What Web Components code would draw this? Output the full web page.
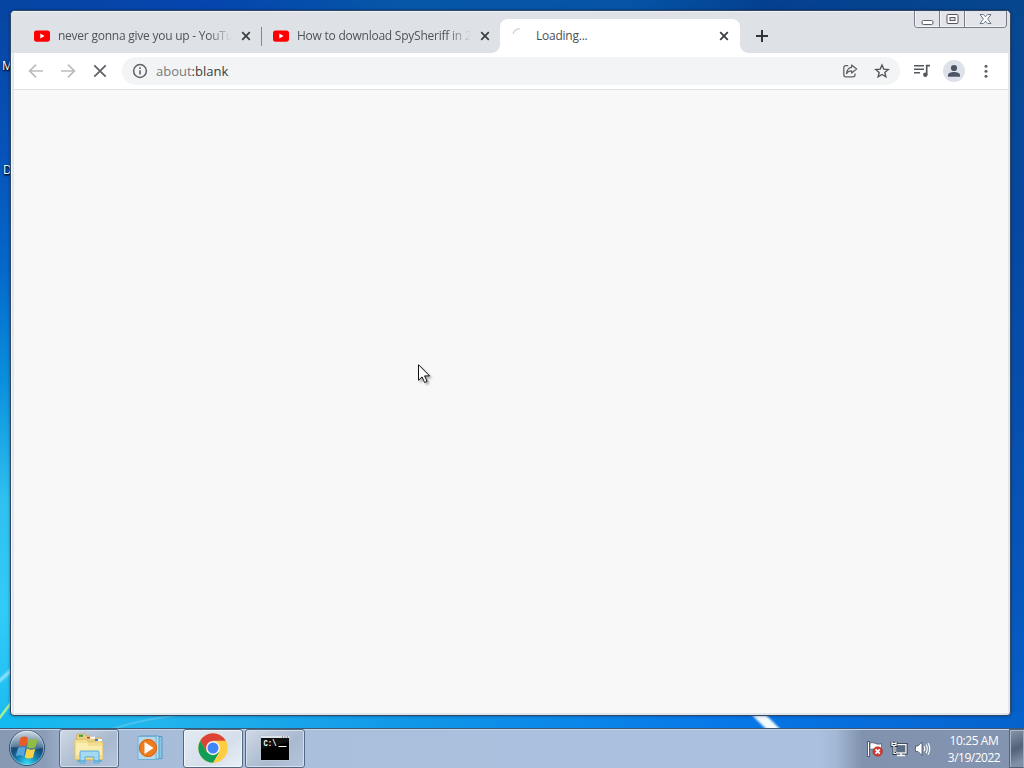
<!DOCTYPE html>
<html lang="en">
<head>
<meta charset="utf-8">
<title>Desktop</title>
<style>
  html, body {
    margin: 0;
    width: 1024px;
    height: 768px;
    overflow: hidden;
    font-family: "Open Sans", "Noto Sans", sans-serif;
  }
</style>
</head>
<body>
<desk-top>
  <desktop-label slot="labels" style="left: 2px; top: 58px">M</desktop-label>
  <desktop-label slot="labels" style="left: 3px; top: 162px">D</desktop-label>

  <browser-window>
    <browser-tab slot="tabs" icon="youtube">never gonna give you up - YouTube</browser-tab>
    <browser-tab slot="tabs" icon="youtube" last>How to download SpySheriff in 2022</browser-tab>
    <browser-tab slot="tabs" icon="loading" active>Loading...</browser-tab>
    <window-controls slot="controls"></window-controls>
    <nav-bar slot="nav">about<b>:blank</b></nav-bar>
  </browser-window>

  <task-bar slot="taskbar">
    <task-button icon="explorer" open></task-button>
    <task-button icon="player"></task-button>
    <task-button icon="chrome" open active></task-button>
    <task-button icon="console" open></task-button>
    <tray-area slot="tray">
      <tray-clock time="10:25 AM" date="3/19/2022"></tray-clock>
    </tray-area>
  </task-bar>

  <mouse-pointer slot="pointer" style="left: 418px; top: 364px"></mouse-pointer>
</desk-top>

<script>
const icons = {
  youtube: `<svg width="16" height="16" viewBox="0 0 16 16"><rect y="2.5" width="16" height="11.2" rx="2.6" fill="#f00"/><path d="M6.3 5.6v5l4.3-2.5z" fill="#fff"/></svg>`,
  loading: `<svg width="16" height="16" viewBox="0 0 16 16" fill="none" stroke="#d0d2d4" stroke-width="1.3"><path d="M1 6.2A7.2 7.2 0 0 1 8 .9"/></svg>`,
  close: `<svg width="16" height="16" viewBox="0 0 16 16" fill="none" stroke="#3c4043" stroke-width="1.8"><path d="M4.2 4.2l7.6 7.6M11.8 4.2l-7.6 7.6"/></svg>`,
  plus: `<svg width="16" height="16" viewBox="0 0 16 16" fill="none" stroke="#303337" stroke-width="2"><path d="M8 2v12M2 8h12"/></svg>`,
  back: `<svg width="20" height="20" viewBox="0 0 20 20" fill="none" stroke="#babcbe" stroke-width="1.7"><path d="M17 10H4M10 3.6L3.6 10l6.4 6.4"/></svg>`,
  forward: `<svg width="20" height="20" viewBox="0 0 20 20" fill="none" stroke="#babcbe" stroke-width="1.7"><path d="M3 10h13M10 3.6l6.4 6.4-6.4 6.4"/></svg>`,
  stop: `<svg width="20" height="20" viewBox="0 0 20 20" fill="none" stroke="#5f6368" stroke-width="1.8"><path d="M4.3 4.3l11.4 11.4M15.7 4.3L4.3 15.7"/></svg>`,
  info: `<svg width="16" height="16" viewBox="0 0 16 16" fill="none" stroke="#5f6368"><circle cx="8" cy="8" r="6.4" stroke-width="1.5"/><path d="M8 7.2v4.3M8 4.3v1.6" stroke-width="1.6"/></svg>`,
  share: `<svg width="16" height="16" viewBox="0 0 16 16" fill="none" stroke="#5f6368" stroke-width="1.3"><path d="M6.2 2.6H3.8a2 2 0 0 0-2 2v7.2a2 2 0 0 0 2 2h7.2a2 2 0 0 0 2-2V10.4"/><path d="M9.6 2.1l5 4-5 4V7.9C7.4 7.9 5.7 8.7 4.5 10.6 4.9 7.3 6.5 4.6 9.6 4.3z" stroke-linejoin="round"/></svg>`,
  star: `<svg width="16" height="16" viewBox="0 0 16 16" fill="none" stroke="#55595e" stroke-width="1.4"><path d="M8 2l1.75 4.1 4.5.4-3.42 2.95 1.03 4.4L8 11.5l-3.86 2.35 1.03-4.4L1.75 6.500l4.5-.4z"/></svg>`,
  media: `<svg width="18" height="16" viewBox="0 0 18 16"><path d="M1 2.7h10M1 6.2h10M1 9.7h6" stroke="#54585d" stroke-width="1.5"/><path d="M13.7 12V2.7H17" fill="none" stroke="#54585d" stroke-width="1.7"/><circle cx="12.3" cy="11.8" r="2.2" fill="#54585d"/></svg>`,
  person: `<svg width="22" height="22" viewBox="0 0 22 22"><circle cx="11" cy="11" r="11" fill="#dee1e9"/><circle cx="11" cy="8" r="3.1" fill="#4c5564"/><path d="M5 16.800v-1.500c0-4.300 12-4.300 12 0v1.500z" fill="#4c5564"/></svg>`,
  dots: `<svg width="16" height="16" viewBox="0 0 16 16" fill="#5f6368"><circle cx="8" cy="3.3" r="1.5"/><circle cx="8" cy="8.3" r="1.5"/><circle cx="8" cy="13.3" r="1.5"/></svg>`,

  explorer: `<svg width="34" height="32" viewBox="0 0 34 32">
    <path d="M4.5 3.5l1-1.5h8l1 2h4l1 2h10v22h-25z" fill="#e8cf7d" stroke="#c9a957" stroke-width=".7"/>
    <path d="M7 2.800h4v2H7z" fill="#3ca04a"/><path d="M15 4.700h8v2h-8z" fill="#fff"/><path d="M15 4.700h3v2h-3z" fill="#d24a35"/>
    <path d="M23 7h7v2.500h-7z" fill="#fff"/><path d="M23 7h3v2h-3z" fill="#3d7ecb"/>
    <path d="M2.500 9.500q0-2 2-2h10l2 2.500h14.500v17.500h-28z" fill="#f3df90" stroke="#d9bd6a" stroke-width=".7"/>
    <path d="M4 11h11l2 3h13v9H4z" fill="#f9edb0"/>
    <path d="M8 20q0-1 1-1h17q1 0 1 1v11h-5v-6h-9v6H8z" fill="#a5d8f2" stroke="#53a4d2" stroke-width=".9"/>
    <path d="M5 29h8M22 29h8" stroke="#58aad8" stroke-width="1.5"/></svg>`,
  player: `<svg width="28" height="28" viewBox="0 0 28 28">
    <path d="M6 2.500h20v22H6z" fill="#8dc6e4" stroke="#5499c2"/><path d="M4 2h19v23H4z" fill="#b8def0" stroke="#559dc6"/>
    <path d="M2 2.500h18v23H2z" fill="#b9d8ec" stroke="#6cb0d6"/>
    <circle cx="12" cy="14" r="9" fill="#ee7d20"/><circle cx="12" cy="14" r="8.500" fill="none" stroke="#d9630f"/><path d="M8.500 8v12l9-6z" fill="#fff"/></svg>`,
  chrome: `<svg width="30" height="30" viewBox="0 0 30 30">
    <circle cx="15" cy="15" r="14.7" fill="#ffcd42"/>
    <path d="M2.270 7.650A14.700 14.700 0 0 1 27.730 7.650H15L8.640 18.670z" fill="#db4437"/>
    <path d="M2.270 7.650A14.700 14.700 0 0 0 15 29.700l6.360-11.020L15 22.350l-6.360-3.670z" fill="#0f9d58"/>
    <circle cx="15" cy="15" r="6.9" fill="#f5f5f5"/><circle cx="15" cy="15" r="5.5" fill="#4285f4"/></svg>`,
  console: `<svg width="30" height="26" viewBox="0 0 30 26">
    <rect x=".5" y=".5" width="29" height="25" fill="#111" stroke="#b9c5d3"/>
    <path d="M1 2h28" stroke="#dce3eb" stroke-width="2"/><path d="M22 2h1M24.500 2h1M27 2h1" stroke="#555"/>
    <path d="M1 14L29 7v18H1z" fill="#000"/>
    <text x="3.500" y="11" fill="#fff" font-family="Liberation Mono, monospace" font-size="8.500" font-weight="bold" textLength="13" lengthAdjust="spacingAndGlyphs">C:\\</text>
    <path d="M18.500 11.500h8" stroke="#fff"/></svg>`,

  flag: `<svg width="18" height="18" viewBox="0 0 18 18"><path d="M2.500 1.500v15" stroke="#222b38" stroke-width="3"/><path d="M2.500 2v14" stroke="#fff" stroke-width="1.5"/>
    <path d="M4 3q3-1 6 .7 2.500 1 5.500 0v6q-3 1-6 0-3-1.300-5.500-.2z" fill="#fff" stroke="#354052" stroke-width=".6"/>
    <circle cx="11.700" cy="11.500" r="4.800" fill="#d13b30" stroke="#ad2922" stroke-width=".5"/><path d="M9.600 9.400l4.200 4.200M13.800 9.400l-4.200 4.200" stroke="#fff" stroke-width="1.7"/></svg>`,
  network: `<svg width="18" height="18" viewBox="0 0 18 18"><rect x="5.500" y="4.500" width="10.500" height="8.500" fill="none" stroke="#253040" stroke-width="3"/>
    <rect x="5.500" y="4.500" width="10.500" height="8.500" fill="#5d6d84" stroke="#fff" stroke-width="1.300"/>
    <path d="M7 15.500h8M11 13v2" stroke="#fff" stroke-width="1.5"/>
    <path d="M2 1.500v4h4v-4M4 5.500v8h2" fill="none" stroke="#253040" stroke-width="2.800"/><path d="M2 1.500v4h4v-4M4 5.500v8h2M2 3.500h4" fill="none" stroke="#fff" stroke-width="1.2"/></svg>`,
  volume: `<svg width="18" height="18" viewBox="0 0 18 18"><path d="M1.500 6h2.500L8 2v13.500l-4-4H1.500z" fill="#fff" stroke="#344052" stroke-width=".7"/>
    <path d="M10 6.300q1.500 2.500 0 5M12 4.500q2.600 4.300 0 8.600M14 3q3.500 5.800 0 11.600" fill="none" stroke="#fff" stroke-width="1.1"/></svg>`
};

class BaseElement extends HTMLElement {
  constructor() {
    super();
    this.attachShadow({ mode: 'open' });
  }
  connectedCallback() {
    this.shadowRoot.innerHTML = this.render();
  }
}

class DeskTop extends BaseElement {
  render() {
    return `
      <style>
        :host {
          display: grid;
          grid-template-rows: 1fr 40px;
          position: relative;
          width: 1024px;
          height: 768px;
          overflow: hidden;
          background: #0754b0;
        }
        .wallpaper { position: absolute; left: 0; top: 0; }
        main { position: relative; padding: 10px 13px 12px 10px; display: grid; }
        ::slotted(task-bar) { position: relative; }
      </style>
      <svg class="wallpaper" width="1024" height="768">
        <defs>
          <linearGradient id="left" x2="0" y2="1">
            <stop offset="0" stop-color="#0744a0"/><stop offset=".2" stop-color="#0753ba"/>
            <stop offset=".35" stop-color="#0468cb"/><stop offset=".5" stop-color="#0a90dd"/>
            <stop offset=".65" stop-color="#2fc0f0"/><stop offset=".8" stop-color="#32cbf8"/>
            <stop offset="1" stop-color="#12b4ec"/>
          </linearGradient>
          <linearGradient id="top">
            <stop offset="0" stop-color="#0645a2"/><stop offset=".2" stop-color="#0545ae"/>
            <stop offset=".4" stop-color="#0657a8"/><stop offset=".62" stop-color="#0653a5"/>
            <stop offset=".75" stop-color="#04408f"/><stop offset="1" stop-color="#07478f"/>
          </linearGradient>
          <linearGradient id="right" x2="0" y2="1">
            <stop offset="0" stop-color="#07478f"/><stop offset=".3" stop-color="#0648a1"/>
            <stop offset=".7" stop-color="#0754b8"/><stop offset="1" stop-color="#0562cc"/>
          </linearGradient>
          <linearGradient id="bottom">
            <stop offset="0" stop-color="#12b9f0"/><stop offset=".15" stop-color="#22b5ec"/>
            <stop offset=".4" stop-color="#1097e8"/><stop offset=".7" stop-color="#0778e9"/>
            <stop offset="1" stop-color="#0562cc"/>
          </linearGradient>
          <filter id="soft" x="-20%" y="-50%" width="140%" height="200%"><feGaussianBlur stdDeviation="1"/></filter>
        </defs>
        <rect width="20" height="768" fill="url(#left)"/>
        <rect x="1000" width="24" height="768" fill="url(#right)"/>
        <rect y="0" width="1024" height="20" fill="url(#top)"/>
        <rect y="712" width="1024" height="20" fill="url(#bottom)"/>
        <path d="M-2 682L14 668" stroke="#b6efff" stroke-width="3" opacity=".8" filter="url(#soft)"/>
        <path d="M-2 720L14 699" stroke="#a4ed9b" stroke-width="2.500"/>
        <path d="M112 729Q150 717 190 714" stroke="#72cdf0" stroke-width="2" fill="none" opacity=".5"/>
        <path d="M748 711h14l19 19h-14z" fill="#f4fbff" filter="url(#soft)"/>
      </svg>
      <slot name="labels"></slot>
      <main><slot></slot></main>
      <slot name="taskbar"></slot>
      <slot name="pointer"></slot>`;
  }
}

class DesktopLabel extends BaseElement {
  render() {
    return `
      <style>
        :host { position: absolute; color: #fff; font-size: 12px; line-height: 16px; text-shadow: 0 1px 2px #000, 1px 1px 2px #000; }
      </style>
      <slot></slot>`;
  }
}

class BrowserWindow extends BaseElement {
  render() {
    return `
      <style>
        :host {
          display: grid;
          grid-template-rows: 42px 36px 1fr;
          box-sizing: border-box;
          border: 1px solid #314862;
          border-radius: 5px 5px 4px 4px;
          background: #e2e7ed;
          box-shadow: inset 1px 1px #f5f8fb, 0 0 3px rgba(0, 20, 60, .5);
          overflow: hidden;
        }
        header { display: flex; align-items: flex-end; padding-left: 11px; background: #dee1e6; border-top: 1px solid #eef1f5; box-sizing: border-box; }
        .new { display: flex; padding: 0 13px 9px 14px; }
        .controls { margin-left: auto; align-self: flex-start; }
        .nav { margin: 0 2px 0 3px; }
        .page { margin: 0 2px 2px 3px; background: #f8f8f8; border-top: 1px solid #dcdee0; }
      </style>
      <header>
        <slot name="tabs"></slot>
        <div class="new">${icons.plus}</div>
        <div class="controls"><slot name="controls"></slot></div>
      </header>
      <div class="nav"><slot name="nav"></slot></div>
      <div class="page"></div>`;
  }
}

class BrowserTab extends BaseElement {
  render() {
    const active = this.hasAttribute('active');
    const last = this.hasAttribute('last');
    return `
      <style>
        :host {
          display: flex;
          align-items: center;
          gap: 8px;
          box-sizing: border-box;
          position: relative;
          width: ${active ? 240 : 239}px;
          height: 34px;
          padding: 0 ${active ? 8 : 7}px 0 12px;
          border-radius: 8px 8px 0 0;
          background: ${active ? '#fff' : 'transparent'};
          color: ${active ? '#4d5054' : '#505459'};
          font-size: 12px;
          letter-spacing: -.24px;
        }
        svg { flex: none; display: block; }
        .title {
          flex: 1;
          min-width: 0;
          height: 18px;
          line-height: 18px;
          overflow: hidden;
          white-space: nowrap;
          margin-right: -2px;
          ${active ? '' : '-webkit-mask-image: linear-gradient(90deg, #000 calc(100% - 24px), transparent);'}
        }
        .divider { position: absolute; right: -1px; top: 8px; width: 1px; height: 19px; background: #85888d; }
        .foot { position: absolute; bottom: 0; width: 8px; height: 8px; }
        .foot.l { left: -8px; background: radial-gradient(circle at 0 0, transparent 7.5px, #fff 8px); }
        .foot.r { right: -8px; background: radial-gradient(circle at 100% 0, transparent 7.5px, #fff 8px); }
      </style>
      ${icons[this.getAttribute('icon')]}
      <div class="title"><slot></slot></div>
      ${icons.close}
      ${active ? '<i class="foot l"></i><i class="foot r"></i>' : last ? '' : '<i class="divider"></i>'}`;
  }
}

class WindowControls extends BaseElement {
  render() {
    return `
      <style>
        :host { display: flex; box-sizing: border-box; width: 93px; height: 17px; margin: -1px 3px 0 0; border: 1px solid #777b88; border-top: 0; border-radius: 0 0 4px 4px; overflow: hidden; }
        span { display: flex; align-items: center; justify-content: center; width: 24px; border-right: 1px solid #777b88; background: #e2e4e9; box-shadow: inset 1px -1px #f2f4f7; }
        span:last-child { flex: 1; border: 0; }
      </style>
      <span><svg width="13" height="12"><rect x="1" y="7.500" width="11" height="4" rx="1.500" fill="#fff" stroke="#5b5f6d"/></svg></span>
      <span><svg width="13" height="12"><rect x="1" y="1.500" width="11" height="9" rx="1" fill="#fff" stroke="#5b5361"/><rect x="4" y="4.500" width="5" height="3" fill="#dee1e6" stroke="#5b5361"/></svg></span>
      <span><svg width="13" height="12"><path d="M1 1.500h3.300l2.200 2.300 2.200-2.300H12L8.600 6l3.400 4.500H8.700L6.500 8.200l-2.200 2.300H1L4.400 6z" fill="#fff" stroke="#5e6b78" stroke-width=".9"/></svg></span>`;
  }
}

class NavBar extends BaseElement {
  render() {
    return `
      <style>
        :host { display: flex; align-items: center; box-sizing: border-box; height: 36px; padding: 0 14px 0 12px; background: #fff; }
        svg { display: block; flex: none; }
        .buttons { display: flex; gap: 12px; }
        .omnibox { display: flex; flex: 1; align-items: center; box-sizing: border-box; height: 28px; margin: 0 13px 0 12px; padding: 0 10px; border-radius: 14px; background: #f2f4f5; }
        .url { flex: 1; padding-left: 8px; font-size: 13px; line-height: 18px; letter-spacing: 0; color: #777b7f; }
        ::slotted(b) { font-weight: normal; color: #3a3d41; }
        .page-actions { display: flex; gap: 16px; }
        .actions { display: flex; align-items: center; }
        .actions svg:nth-child(2) { margin: 0 13px 0 12px; }
      </style>
      <div class="buttons">${icons.back}${icons.forward}${icons.stop}</div>
      <div class="omnibox">
        ${icons.info}
        <div class="url"><slot></slot></div>
        <div class="page-actions">${icons.share}${icons.star}</div>
      </div>
      <div class="actions">${icons.media}${icons.person}${icons.dots}</div>`;
  }
}

class TaskBar extends BaseElement {
  render() {
    return `
      <style>
        :host {
          display: flex;
          box-sizing: border-box;
          height: 40px;
          border-top: 1px solid #3d5872;
          box-shadow: inset 0 1px #c5d5e7;
          background: linear-gradient(90deg, #8798b3 0, #8c9db8 45px, #a5bad7 75px, #a9c0dd 300px, #a9c1df 820px, #a2b8d4 836px, #8092ad 862px, #8294af 100%);
        }
        .start { display: flex; width: 59px; padding-left: 8px; box-sizing: border-box; }
        .buttons { display: flex; gap: 2px; flex: 1; }
      </style>
      <div class="start">
        <svg width="38" height="38" viewBox="0 0 38 38">
          <defs>
            <radialGradient id="orb" cx=".5" cy=".95" r=".9"><stop offset="0" stop-color="#36e1f4"/><stop offset=".3" stop-color="#168dbd"/><stop offset=".6" stop-color="#174a75"/><stop offset="1" stop-color="#587b9b"/></radialGradient>
            <linearGradient id="gloss" x2="0" y2="1"><stop offset="0" stop-color="#fff" stop-opacity=".7"/><stop offset="1" stop-color="#fff" stop-opacity=".15"/></linearGradient>
          </defs>
          <circle cx="19" cy="19" r="17.5" fill="url(#orb)" stroke="#294b6c"/>
          <circle cx="19" cy="19" r="16.7" fill="none" stroke="#a9cfe2" stroke-width=".7"/>
          <path d="M2.500 18a16.500 16.500 0 0 1 33 0q-8 4-16.500 2t-16.500-2z" fill="url(#gloss)"/>
          <path d="M12.500 8.800q4-2.300 7.500-.3L18 17.500q-3.300-2-7.500 0z" fill="#e95a27"/>
          <path d="M21 9.200q4 2.300 8.700.3L27.500 18.300q-4.500 2-8.500-.3z" fill="#91bd45"/>
          <path d="M10 19q4-2.200 7.700 0L15.500 27.500q-3.500-2.200-7.700-.2z" fill="#58a4dc"/>
          <path d="M18.800 19.600q4 2.200 8.400.2L25 28.500q-4.300 2-8.300-.3z" fill="#fbd247"/>
        </svg>
      </div>
      <div class="buttons"><slot></slot></div>
      <slot name="tray"></slot>`;
  }
}

class TaskButton extends BaseElement {
  render() {
    const open = this.hasAttribute('open');
    const active = this.hasAttribute('active');
    return `
      <style>
        :host {
          display: flex;
          align-items: center;
          justify-content: center;
          box-sizing: border-box;
          width: 60px;
          height: 39px;
          ${open ? '' : 'padding-right: 3px;'}
          border: 1px solid ${open ? '#53677f' : 'transparent'};
          border-radius: 3px;
          ${open ? `box-shadow: inset 0 0 0 1px ${active ? '#f2f6fb' : '#d5dfeb'};` : ''}
          ${open ? `background: ${active ? 'linear-gradient(140deg, #e3eaf3, #d5dfeb 60%, #eaf0f6)' : 'linear-gradient(140deg, #cfd8e5, #a9b9cf 60%, #b5c6dc)'};` : ''}
        }
        svg { display: block; margin-top: -1px; }
      </style>
      ${icons[this.getAttribute('icon')]}`;
  }
}

class TrayArea extends BaseElement {
  render() {
    return `
      <style>
        :host { display: flex; align-items: center; }
        .icons { display: flex; gap: 6px; padding: 0 15px 0 0; }
        .peek { box-sizing: border-box; width: 15px; height: 39px; margin-left: 8px; border: 1px solid #526278; border-right-color: #9aabc2; box-shadow: inset 1px 1px #aab8c9; background: linear-gradient(155deg, #8997aa, #536277 50%, #7f8fa5 85%); }
      </style>
      <div class="icons">${icons.flag}${icons.network}${icons.volume}</div>
      <slot></slot>
      <div class="peek"></div>`;
  }
}

class TrayClock extends BaseElement {
  render() {
    return `
      <style>
        :host { display: block; width: 54px; padding-top: 1px; color: #fff; font-size: 12px; line-height: 17px; text-align: center; white-space: nowrap; letter-spacing: -.4px; }
        .date { margin: 0 -2px; letter-spacing: -.5px; }
      </style>
      <div>${this.getAttribute('time')}</div>
      <div class="date">${this.getAttribute('date')}</div>`;
  }
}

class MousePointer extends BaseElement {
  render() {
    return `
      <style>
        :host { display: block; position: absolute; filter: drop-shadow(2px 2px 1px rgba(0, 0, 0, .3)); }
        svg { display: block; }
      </style>
      <svg width="13" height="20" viewBox="0 0 13 20"><path d="M.5.7v15.600l3.600-3.400 2.500 5.600 2.500-1.100-2.500-5.500h5z" fill="#fff" stroke="#111"/></svg>`;
  }
}

customElements.define('desk-top', DeskTop);
customElements.define('desktop-label', DesktopLabel);
customElements.define('browser-window', BrowserWindow);
customElements.define('browser-tab', BrowserTab);
customElements.define('window-controls', WindowControls);
customElements.define('nav-bar', NavBar);
customElements.define('task-bar', TaskBar);
customElements.define('task-button', TaskButton);
customElements.define('tray-area', TrayArea);
customElements.define('tray-clock', TrayClock);
customElements.define('mouse-pointer', MousePointer);
</script>
</body>
</html>
